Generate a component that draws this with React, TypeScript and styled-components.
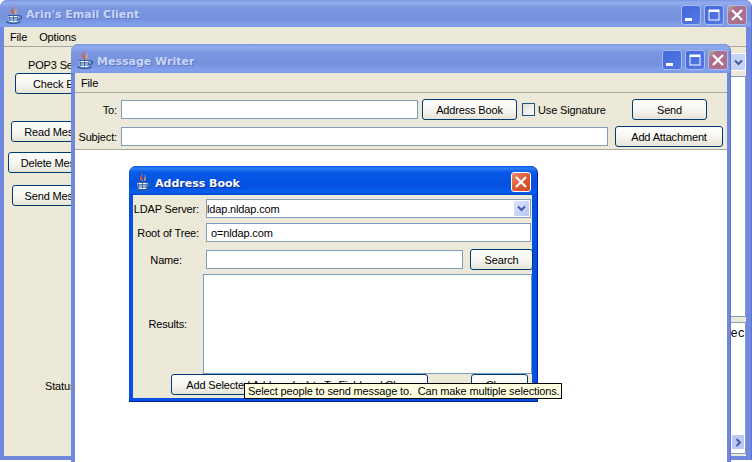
import React from 'react'
import styled, { createGlobalStyle } from 'styled-components'

const GlobalStyle = createGlobalStyle`
  html, body {
    margin: 0;
    padding: 0;
    background: #ffffff;
  }
  body {
    font-family: "Liberation Sans", "Noto Sans", sans-serif;
    font-size: 11px;
    letter-spacing: -0.15px;
    color: #000000;
  }
`

const Desktop = styled.div`
  position: relative;
  width: 752px;
  height: 462px;
  overflow: hidden;
`

const Window = styled.section<{ $active?: boolean }>`
  position: absolute;
  box-sizing: border-box;
  display: flex;
  flex-direction: column;
  overflow: hidden;
  border-radius: 7px 7px 0 0;
  background: ${p => (p.$active ? '#0450e0' : '#7188df')};
  border-right: 1px solid ${p => (p.$active ? '#00229c' : '#5f74d0')};
`

const MainWindow = styled(Window)`
  left: 0;
  top: 0;
  width: 752px;
  height: 460px;
  padding: 0 5px 4px 4px;
`

const WriterWindow = styled(Window)`
  left: 71px;
  top: 44px;
  width: 660px;
  height: 440px;
  padding: 0 3px 4px 4px;
`

const AddressWindow = styled(Window)`
  left: 129px;
  top: 166px;
  width: 409px;
  height: 236px;
  padding: 0 5px 4px 4px;
  box-shadow: inset 0 -1px 0 #00229c;
`

const TitleBar = styled.header<{ $active?: boolean; $height: number; $right: number }>`
  flex: none;
  box-sizing: border-box;
  display: flex;
  align-items: center;
  gap: 2px;
  height: ${p => p.$height}px;
  margin: 0 -5px 0 -4px;
  padding: 2px ${p => p.$right}px 0 5px;
  background: ${p =>
    p.$active
      ? 'linear-gradient(180deg, #0a5ae8 0%, #2d7cf5 8%, #0759e6 22%, #0450e0 70%, #0a5fee 90%, #0348d0 100%)'
      : 'linear-gradient(180deg, #7d97e4 0%, #92aded 10%, #7a96e0 30%, #7692de 70%, #82a0ec 92%, #7c98e4 100%)'};
`

const TitleText = styled.h1<{ $active?: boolean; $drop?: number }>`
  flex: 1;
  margin: ${p => p.$drop ?? 0}px 0 0;
  font-family: "DejaVu Sans", sans-serif;
  font-size: 11px;
  font-weight: 700;
  letter-spacing: 0;
  color: ${p => (p.$active ? '#ffffff' : '#c9d6f5')};
  text-shadow: 1px 1px 0 ${p => (p.$active ? '#0a2f9a' : '#5f78c8')};
`

const CaptionButtons = styled.div`
  display: flex;
  gap: 3px;
`

const CaptionButton = styled.button<{ $kind: 'min' | 'max' | 'close'; $active?: boolean }>`
  box-sizing: border-box;
  width: 20px;
  height: 20px;
  padding: 0;
  border: 1px solid ${p => (p.$active ? '#ffffff' : '#a9bcf0')};
  border-radius: 3px;
  background: ${p =>
    p.$kind === 'close'
      ? p.$active
        ? 'linear-gradient(135deg, #ea8a6c, #dc5a32 50%, #cf4a22)'
        : 'linear-gradient(135deg, #b09a90 0 12%, #ae6f8e 24%)'
      : 'linear-gradient(135deg, #4468dc, #5578e6)'};
  display: flex;
  align-items: center;
  justify-content: center;
`

const MenuBar = styled.nav`
  flex: none;
  display: flex;
  gap: 12px;
  height: 20px;
  align-items: center;
  padding: 0 6px;
  background: #ece9d8;
  border-bottom: 1px solid #a8a99c;
  box-sizing: border-box;
`

const MenuItem = styled.span`
  font-size: 11px;
`

const Pane = styled.div`
  flex: 1;
  min-height: 0;
  display: flex;
  flex-direction: column;
  background: #ece9d8;
`

const MainBody = styled(Pane)`
  flex-direction: row;
  justify-content: space-between;
  padding: 6px 0 0;
`

const LeftColumn = styled.div`
  display: flex;
  flex-direction: column;
  width: 200px;
`

const PushButton = styled.button<{ $width?: number; $height?: number; $left?: number; $top?: number }>`
  flex: none;
  box-sizing: border-box;
  width: ${p => (p.$width ? `${p.$width}px` : 'auto')};
  height: ${p => p.$height ?? 21}px;
  margin-left: ${p => p.$left ?? 0}px;
  margin-top: ${p => p.$top ?? 0}px;
  padding: 0;
  font: inherit;
  letter-spacing: inherit;
  color: #000000;
  white-space: nowrap;
  overflow: hidden;
  border: 1px solid #003c74;
  border-radius: 3px;
  background: linear-gradient(180deg, #ffffff 0%, #f6f5ef 55%, #e6e3d6 100%);
`

const PlainLabel = styled.span<{ $left?: number; $top?: number }>`
  flex: none;
  margin-left: ${p => p.$left ?? 0}px;
  margin-top: ${p => p.$top ?? 0}px;
  white-space: nowrap;
  line-height: 14px;
`

const RightColumn = styled.div`
  display: flex;
  flex-direction: column;
  align-items: flex-end;
  width: 100px;
`

const SideCombo = styled.div`
  box-sizing: border-box;
  height: 18px;
  width: 16px;
  display: flex;
  align-items: center;
  justify-content: center;
  background: #c5d3f6;
  border: 1px solid #fff;
`

const SideList = styled.div<{ $height: number; $top: number }>`
  box-sizing: border-box;
  display: flex;
  flex-direction: column;
  align-items: flex-end;
  width: 100px;
  height: ${p => p.$height}px;
  margin-top: ${p => p.$top}px;
  background: #ffffff;
  border: 1px solid #7f9db9;
`

const SideListText = styled.span`
  margin-top: 4px;
  font-family: "Liberation Mono", monospace;
  font-size: 12px;
  letter-spacing: 0;
  line-height: 15px;
  white-space: nowrap;
`

const SideArrow = styled.div`
  box-sizing: border-box;
  width: 14px;
  height: 16px;
  margin-top: 92px;
  display: flex;
  align-items: center;
  justify-content: center;
  background: #b9c9f3;
  border: 1px solid #fff;
`

const WriterForm = styled.div`
  flex: none;
  display: flex;
  flex-direction: column;
  gap: 6px;
  padding: 6px 5px 2px 0;
  border-bottom: 1px solid #a8a99c;
`

const FormRow = styled.div`
  display: flex;
  align-items: center;
`

const RowLabel = styled.label<{ $width: number; $align?: string }>`
  flex: none;
  box-sizing: border-box;
  width: ${p => p.$width}px;
  text-align: ${p => p.$align ?? 'right'};
  white-space: nowrap;
`

const Field = styled.div<{ $width: number; $height?: number; $left?: number; $indent?: number }>`
  flex: none;
  box-sizing: border-box;
  width: ${p => p.$width}px;
  height: ${p => p.$height ?? 19}px;
  margin-left: ${p => p.$left ?? 0}px;
  padding-left: ${p => p.$indent ?? 0}px;
  display: flex;
  align-items: center;
  justify-content: space-between;
  background: #ffffff;
  border: 1px solid #7f9db9;
`

const CheckBox = styled.span`
  flex: none;
  box-sizing: border-box;
  width: 13px;
  height: 13px;
  margin-left: 5px;
  margin-right: 3px;
  border: 1px solid #1c5180;
  background: linear-gradient(135deg, #dcdcd7, #ffffff);
`

const CheckLabel = styled.span`
  flex: none;
  width: 67px;
  white-space: nowrap;
`

const Canvas = styled.div`
  flex: 1;
  background: #ffffff;
`

const AddressBody = styled(Pane)`
  padding: 4px 0 0 0;
`

const AddressRow = styled(FormRow)<{ $top?: number }>`
  margin-top: ${p => p.$top ?? 0}px;
`

const ComboArrow = styled.span`
  width: 15px;
  height: 15px;
  margin-right: 1px;
  display: flex;
  align-items: center;
  justify-content: center;
  background: linear-gradient(135deg, #dbe4fb, #b6c7f3);
`

const Tooltip = styled.div`
  position: absolute;
  left: 244px;
  top: 383px;
  box-sizing: border-box;
  width: 318px;
  height: 16px;
  padding-left: 3px;
  line-height: 14px;
  white-space: pre;
  background: #ffffe1;
  border: 1px solid #000000;
`

const JavaIcon = () => (
  <svg width="19" height="20" viewBox="0 0 19 20" style={{ flex: 'none' }}>
    <path d="M8 1c2 2-1 3 0 5 .5 1.200 1.500 2 1 3.500C7.500 9 5.500 7.500 6 5.500 6.500 4 8 3 8 1z" fill="#e2572c" />
    <path d="M10.500 3c1 2-1 3 0 6.500 1-1 2-3 .5-6.500z" fill="#f2a35c" />
    <path d="M3 10.500h11l-1 5c-.3 1-1.500 1.500-4.500 1.500s-4.200-.5-4.500-1.500z" fill="#fff" />
    <path d="M3 10.500h11M3.500 12.800h10M4 15h9" stroke="#2f5f9e" strokeWidth="1.200" />
    <path d="M4 11l1 5M8.500 11v5.500M13 11l-1 5" stroke="#2f5f9e" strokeWidth="0.800" />
    <path d="M14 11c3.500-.8 4 2.500-1 4" stroke="#2f5f9e" strokeWidth="1.100" fill="none" />
    <path d="M1.500 16.500c2 2.500 12 2.500 14 0" stroke="#2f5f9e" strokeWidth="1.300" fill="none" />
  </svg>
)

const CaptionGlyph = ({ kind }: { kind: 'min' | 'max' | 'close' }) => (
  <svg width="14" height="14" viewBox="0 0 14 14">
    {kind === 'min' && <rect x="1" y="10" width="7" height="3" fill="#fff" />}
    {kind === 'max' && <path d="M1.500 1.500h11v11h-11zM2.500 4v7.500h9V4z" fill="#fff" fillRule="evenodd" />}
    {kind === 'close' && <path d="M2 2l10 10M12 2L2 12" stroke="#fff" strokeWidth="2.300" />}
  </svg>
)

const Chevron = ({ dir = 'down' }: { dir?: 'down' | 'right' }) => (
  <svg width="9" height="9" viewBox="0 0 9 9">
    <path
      d={dir === 'down' ? 'M1 2.500l3.500 3.500L8 2.500' : 'M2.500 1L6 4.500 2.500 8'}
      stroke="#4d57a8"
      strokeWidth="2"
      fill="none"
    />
  </svg>
)

const Caption = ({ active, closeOnly }: { active?: boolean; closeOnly?: boolean }) => (
  <CaptionButtons>
    {!closeOnly && (
      <CaptionButton $kind="min" $active={active}>
        <CaptionGlyph kind="min" />
      </CaptionButton>
    )}
    {!closeOnly && (
      <CaptionButton $kind="max" $active={active}>
        <CaptionGlyph kind="max" />
      </CaptionButton>
    )}
    <CaptionButton $kind="close" $active={active}>
      <CaptionGlyph kind="close" />
    </CaptionButton>
  </CaptionButtons>
)

const App: React.FC = () => {
  return (
    <Desktop>
      <GlobalStyle />
      <MainWindow>
        <TitleBar $height={27} $right={4}>
          <JavaIcon />
          <TitleText>Arin's Email Client</TitleText>
          <Caption />
        </TitleBar>
        <MenuBar>
          <MenuItem>File</MenuItem>
          <MenuItem>Options</MenuItem>
        </MenuBar>
        <MainBody>
          <LeftColumn>
            <PlainLabel $left={24} $top={5}>POP3 Server:</PlainLabel>
            <PushButton $width={96} $left={11} $top={1}>Check Email</PushButton>
            <PushButton $width={104} $left={7} $top={27}>Read Messages</PushButton>
            <PushButton $width={108} $left={4} $top={10}>Delete Messages</PushButton>
            <PushButton $width={102} $left={8} $top={12}>Send Messages</PushButton>
            <PlainLabel $left={41} $top={173}>Status:</PlainLabel>
          </LeftColumn>
          <RightColumn>
            <SideCombo><Chevron /></SideCombo>
            <SideList $height={241} $top={5} />
            <SideList $height={132} $top={5}>
              <SideListText>Selec</SideListText>
              <SideArrow><Chevron dir="right" /></SideArrow>
            </SideList>
          </RightColumn>
        </MainBody>
      </MainWindow>

      <WriterWindow>
        <TitleBar $height={29} $right={4}>
          <JavaIcon />
          <TitleText $drop={3}>Message Writer</TitleText>
          <Caption />
        </TitleBar>
        <MenuBar>
          <MenuItem>File</MenuItem>
        </MenuBar>
        <Pane>
          <WriterForm>
            <FormRow>
              <RowLabel $width={42}>To:</RowLabel>
              <Field $width={297} $left={4} />
              <PushButton $width={95} $left={4}>Address Book</PushButton>
              <CheckBox />
              <CheckLabel>Use Signature</CheckLabel>
              <PushButton $width={75} $left={27}>Send</PushButton>
            </FormRow>
            <FormRow>
              <RowLabel $width={42}>Subject:</RowLabel>
              <Field $width={487} $left={4} />
              <PushButton $width={108} $left={7}>Add Attachment</PushButton>
            </FormRow>
          </WriterForm>
          <Canvas />
        </Pane>
      </WriterWindow>

      <AddressWindow $active>
        <TitleBar $active $height={29} $right={6}>
          <JavaIcon />
          <TitleText $active $drop={3}>Address Book</TitleText>
          <Caption active closeOnly />
        </TitleBar>
        <AddressBody>
          <AddressRow>
            <RowLabel $width={66}>LDAP Server:</RowLabel>
            <Field $width={325} $left={7}>
              ldap.nldap.com
              <ComboArrow><Chevron /></ComboArrow>
            </Field>
          </AddressRow>
          <AddressRow $top={5}>
            <RowLabel $width={66}>Root of Tree:</RowLabel>
            <Field $width={325} $left={7} $indent={4}>o=nldap.com</Field>
          </AddressRow>
          <AddressRow $top={7}>
            <RowLabel $width={49}>Name:</RowLabel>
            <Field $width={257} $left={24} />
            <PushButton $width={63} $left={7}>Search</PushButton>
          </AddressRow>
          <AddressRow $top={4}>
            <RowLabel $width={54}>Results:</RowLabel>
            <Field $width={329} $height={100} $left={16} />
          </AddressRow>
          <FormRow>
            <PushButton $width={257} $left={38}>Add Selected Address(es) to To Field and Close</PushButton>
            <PushButton $width={57} $left={43}>Close</PushButton>
          </FormRow>
        </AddressBody>
      </AddressWindow>

      <Tooltip>Select people to send message to.  Can make multiple selections.</Tooltip>
    </Desktop>
  )
}

export default App
